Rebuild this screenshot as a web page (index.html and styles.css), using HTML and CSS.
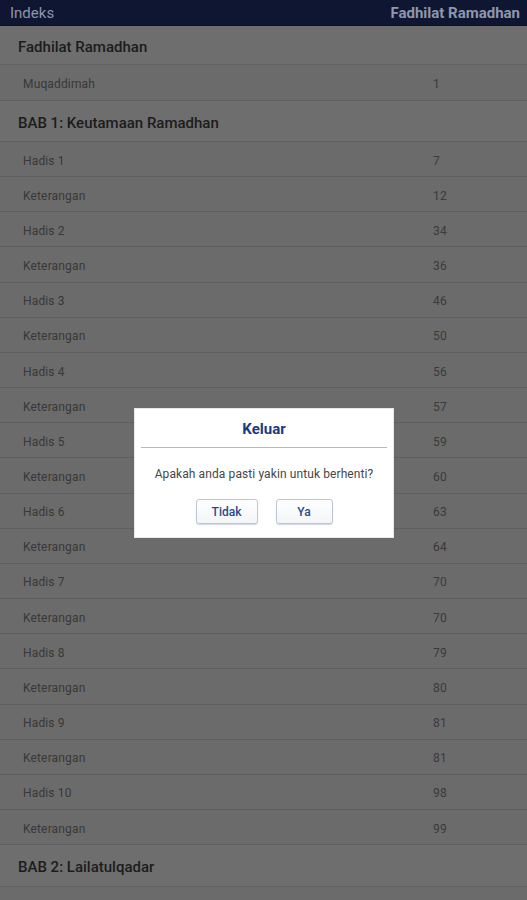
FILE: index.html
```html
<!DOCTYPE html>
<html>
<head>
<meta charset="utf-8">
<link rel="stylesheet" href="styles.css">
</head>
<body>
<div class="app">
  <header class="bar">
    <span class="bar-left">Indeks</span>
    <span class="bar-right">Fadhilat Ramadhan</span>
  </header>
  <div class="list">
    <div class="sec first">Fadhilat Ramadhan</div>
    <div class="row first"><span>Muqaddimah</span><span class="num">1</span></div>
    <div class="sec">BAB 1: Keutamaan Ramadhan</div>
    <div class="row"><span>Hadis 1</span><span class="num">7</span></div>
    <div class="row"><span>Keterangan</span><span class="num">12</span></div>
    <div class="row"><span>Hadis 2</span><span class="num">34</span></div>
    <div class="row"><span>Keterangan</span><span class="num">36</span></div>
    <div class="row"><span>Hadis 3</span><span class="num">46</span></div>
    <div class="row"><span>Keterangan</span><span class="num">50</span></div>
    <div class="row"><span>Hadis 4</span><span class="num">56</span></div>
    <div class="row"><span>Keterangan</span><span class="num">57</span></div>
    <div class="row"><span>Hadis 5</span><span class="num">59</span></div>
    <div class="row"><span>Keterangan</span><span class="num">60</span></div>
    <div class="row"><span>Hadis 6</span><span class="num">63</span></div>
    <div class="row"><span>Keterangan</span><span class="num">64</span></div>
    <div class="row"><span>Hadis 7</span><span class="num">70</span></div>
    <div class="row"><span>Keterangan</span><span class="num">70</span></div>
    <div class="row"><span>Hadis 8</span><span class="num">79</span></div>
    <div class="row"><span>Keterangan</span><span class="num">80</span></div>
    <div class="row"><span>Hadis 9</span><span class="num">81</span></div>
    <div class="row"><span>Keterangan</span><span class="num">81</span></div>
    <div class="row"><span>Hadis 10</span><span class="num">98</span></div>
    <div class="row"><span>Keterangan</span><span class="num">99</span></div>
    <div class="sec last">BAB 2: Lailatulqadar</div>
    <div class="row"><span>Pendahuluan</span><span class="num">104</span></div>
  </div>
  <div class="dialog">
    <div class="dlg-title">Keluar</div>
    <div class="dlg-line"></div>
    <div class="dlg-msg">Apakah anda pasti yakin untuk berhenti?</div>
    <div class="dlg-btns">
      <button class="btn btn-no">Tidak</button>
      <button class="btn btn-yes">Ya</button>
    </div>
  </div>
</div>
</body>
</html>
```
FILE: styles.css
```css
html, body {
  margin: 0;
  padding: 0;
  height: 900px;
  overflow: hidden;
  background: #6a6a6a;
  font-family: Roboto, "Noto Sans", sans-serif;
}
.app {
  position: relative;
  width: 527px;
  height: 900px;
  overflow: hidden;
}
.bar {
  height: 26px;
  background: #0f1632;
  border-bottom: 1px solid #0a0f24;
  box-sizing: border-box;
  display: flex;
  align-items: center;
  justify-content: space-between;
  padding: 0 7px 0 10px;
  color: #8e97ab;
  font-size: 15px;
}
.bar-right {
  font-weight: 700;
}
.list {
  background: #6b6b6b;
}
.sec {
  height: 41px;
  box-sizing: border-box;
  border-bottom: 1px solid #616161;
  display: flex;
  align-items: center;
  padding: 3px 0 0 18px;
  font-size: 15px;
  font-weight: 500;
  color: #1c1c1c;
  background: #6e6e6e;
}
.sec.first {
  height: 39px;
}
.sec.last {
  height: 42px;
}
.row {
  height: 35.16px;
  box-sizing: border-box;
  border-bottom: 1px solid #5f5f5f;
  display: flex;
  align-items: center;
  padding: 3px 0 0 23px;
  font-size: 12px;
  letter-spacing: 0.15px;
  color: #383838;
}
.row.first {
  height: 36px;
}
.row span:first-child {
  width: 410px;
}
.num {
  color: #3a3a3a;
}
.dialog {
  position: absolute;
  left: 134px;
  top: 408px;
  width: 260px;
  height: 130px;
  box-sizing: border-box;
  background: #ffffff;
  border: 1px solid #e8e8e8;
  display: flex;
  flex-direction: column;
  align-items: center;
  padding: 10px 7px 0;
}
.dlg-title {
  font-size: 15px;
  font-weight: 700;
  color: #1b3a86;
  height: 20px;
  line-height: 20px;
}
.dlg-line {
  width: 246px;
  height: 1px;
  background: #b9b9b9;
  margin-top: 8px;
}
.dlg-msg {
  margin-top: 19px;
  font-size: 12px;
  letter-spacing: 0.1px;
  color: #474747;
  line-height: 14px;
}
.dlg-btns {
  margin-top: 18px;
  display: flex;
  gap: 18px;
}
.btn {
  height: 25px;
  box-sizing: border-box;
  border: 1px solid #bcc6d4;
  border-radius: 3px;
  background: linear-gradient(#ffffff, #f3f5f8);
  box-shadow: 0 1px 1px rgba(120, 140, 170, 0.35);
  font-family: Roboto, "Noto Sans", sans-serif;
  font-size: 12px;
  font-weight: 500;
  color: #2b4a86;
  padding: 0;
}
.btn-no {
  width: 62px;
}
.btn-yes {
  width: 57px;
}
```
